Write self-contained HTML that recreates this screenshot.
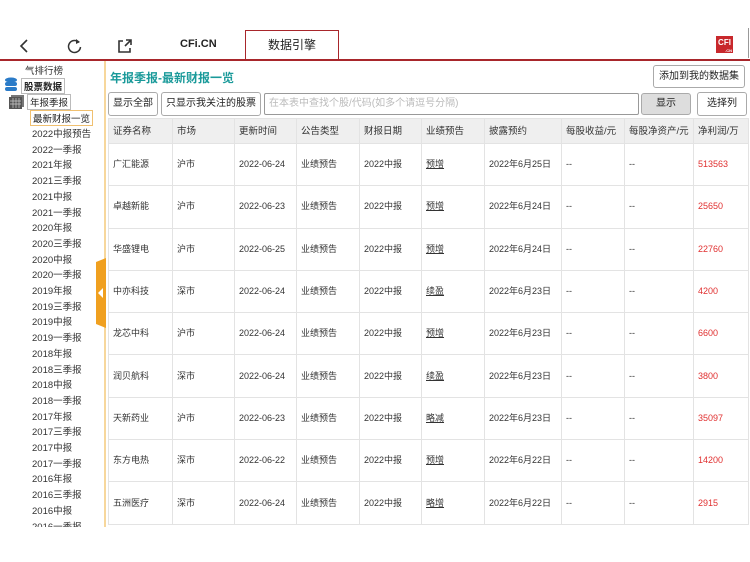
<!DOCTYPE html>
<html><head><meta charset="utf-8"><style>
*{margin:0;padding:0;box-sizing:border-box}
body{width:750px;height:562px;background:#fff;position:relative;overflow:hidden;font-family:"Liberation Sans","Noto Sans CJK SC",sans-serif;color:#333;font-size:10px}
.a{position:absolute}
.topline{left:0;top:59px;width:750px;height:2px;background:#a8262b}
.tab{left:245px;top:30px;width:94px;height:31px;border:1.5px solid #a8262b;border-bottom:none;background:#fff;font-size:12px;text-align:center;line-height:29px;color:#222}
.side{left:0;top:61px;width:105px;height:466px;overflow:hidden}
.vline{left:104px;top:61px;width:2px;height:466px;background:#f7d79c}
.si{position:absolute;left:32px;font-size:9.5px;color:#333}
.btn{position:absolute;border:1px solid #aaa;border-radius:3px;background:#fff;font-size:10px;text-align:center;color:#222}
table{border-collapse:collapse;position:absolute;left:108px;top:118px;width:640px;font-size:9px;table-layout:fixed}
td{border:1px solid #e3e3e3;padding-left:4px;height:42.3px;color:#333;white-space:nowrap;overflow:hidden;vertical-align:middle;line-height:13px}
td span{display:inline-block;vertical-align:middle}
tr.h td{height:25px;background:#efefef;font-size:9.5px}
.r{color:#e03030}
u{text-underline-offset:1px}
</style></head><body>
<svg class="a" style="left:18px;top:38px" width="12" height="16"><path d="M9 2L3 8l6 6" stroke="#333" stroke-width="1.6" fill="none"/></svg>
<svg class="a" style="left:66px;top:37px" width="18" height="18"><path d="M13 5.5A6 6 0 1 0 14.5 10" stroke="#333" stroke-width="1.5" fill="none"/><path d="M10 2l4 3-4 2z" fill="#333"/></svg>
<svg class="a" style="left:117px;top:38px" width="16" height="16"><path d="M6 3H2v11h11v-4" stroke="#333" stroke-width="1.6" fill="none"/><path d="M8 8l6-6M9 2h5v5" stroke="#333" stroke-width="1.6" fill="none"/></svg>
<div class="a" style="left:180px;top:38px;font-size:11px;font-weight:bold;color:#222">CFi.CN</div>
<div class="a tab">数据引擎</div>
<div class="a" style="left:716px;top:36px;width:17px;height:17px;background:#c8282c;color:#fff;font-size:8px;font-weight:bold;text-align:center;line-height:13px">CFI<div style="font-size:4px;line-height:3px;text-align:right;padding-right:1px">.CN</div></div>
<div class="a" style="left:748px;top:28px;width:1px;height:30px;background:#999"></div>
<div class="a topline"></div>

<div class="a side">
<div class="si" style="left:25px;top:2px">气排行榜</div>
<svg class="a" style="left:4px;top:16px" width="14" height="18"><ellipse cx="7" cy="3" rx="6" ry="2.5" fill="#2a7bc8"/><rect x="1" y="5" width="12" height="4" rx="2" fill="#2a7bc8"/><rect x="1" y="10" width="12" height="4" rx="2" fill="#2a7bc8"/></svg>
<div class="si" style="left:21px;top:17px;border:1px solid #bbb;padding:0 2px;font-weight:bold;color:#222">股票数据</div>
<svg class="a" style="left:9px;top:34px" width="16" height="14"><rect x="2" y="0" width="13" height="12" fill="#777"/><rect x="0" y="2" width="13" height="12" fill="#555"/><path d="M1 6h11M1 9h11M4 3v10M7 3v10M10 3v10" stroke="#ccc" stroke-width=".7"/></svg>
<div class="si" style="left:27px;top:33px;border:1px solid #bbb;padding:0 2px;color:#222">年报季报</div>
<div class="si" style="left:30px;top:49px;border:1px solid #f0c070;padding:0 2px;color:#222">最新财报一览</div>
<div class="si" style="top:66px;line-height:15.7px">2022中报预告<br>2022一季报<br>2021年报<br>2021三季报<br>2021中报<br>2021一季报<br>2020年报<br>2020三季报<br>2020中报<br>2020一季报<br>2019年报<br>2019三季报<br>2019中报<br>2019一季报<br>2018年报<br>2018三季报<br>2018中报<br>2018一季报<br>2017年报<br>2017三季报<br>2017中报<br>2017一季报<br>2016年报<br>2016三季报<br>2016中报<br>2016一季报</div>
</div>
<div class="a vline"></div>
<svg class="a" style="left:96px;top:258px" width="10" height="70"><path d="M0 4L10 0V70L0 66Z" fill="#f0a020"/><path d="M7 30L2 35l5 5z" fill="#fff"/></svg>

<div class="a" style="left:110px;top:69px;font-size:12px;color:#1a9a9a;font-weight:bold">年报季报-最新财报一览</div>
<div class="btn" style="left:653px;top:65px;width:92px;height:23px;line-height:21px">添加到我的数据集</div>
<div class="btn" style="left:108px;top:92px;width:50px;height:24px;line-height:22px">显示全部</div>
<div class="btn" style="left:161px;top:92px;width:100px;height:24px;line-height:22px">只显示我关注的股票</div>
<div class="btn" style="left:264px;top:93px;width:375px;height:22px;border-color:#999;text-align:left;padding-left:4px;line-height:20px;color:#bbb;border-radius:2px">在本表中查找个股/代码(如多个请逗号分隔)</div>
<div class="btn" style="left:641px;top:93px;width:50px;height:22px;line-height:20px;background:#ddd">显示</div>
<div class="btn" style="left:697px;top:92px;width:50px;height:24px;line-height:22px">选择列</div>

<table>
<colgroup><col style="width:64px"><col style="width:62px"><col style="width:62px"><col style="width:63px"><col style="width:62px"><col style="width:63px"><col style="width:77px"><col style="width:63px"><col style="width:69px"><col style="width:55px"></colgroup>
<tr class="h"><td>证券名称</td><td>市场</td><td>更新时间</td><td>公告类型</td><td>财报日期</td><td>业绩预告</td><td>披露预约</td><td>每股收益/元</td><td>每股净资产/元</td><td>净利润/万</td></tr>
<tr><td>广汇能源</td><td>沪市</td><td>2022-06-24</td><td>业绩预告</td><td>2022中报</td><td><u>预增</u></td><td>2022年6月25日</td><td>--</td><td>--</td><td class="r">513563</td></tr>
<tr><td>卓越新能</td><td>沪市</td><td>2022-06-23</td><td>业绩预告</td><td>2022中报</td><td><u>预增</u></td><td>2022年6月24日</td><td>--</td><td>--</td><td class="r">25650</td></tr>
<tr><td>华盛锂电</td><td>沪市</td><td>2022-06-25</td><td>业绩预告</td><td>2022中报</td><td><u>预增</u></td><td>2022年6月24日</td><td>--</td><td>--</td><td class="r">22760</td></tr>
<tr><td>中亦科技</td><td>深市</td><td>2022-06-24</td><td>业绩预告</td><td>2022中报</td><td><u>续盈</u></td><td>2022年6月23日</td><td>--</td><td>--</td><td class="r">4200</td></tr>
<tr><td>龙芯中科</td><td>沪市</td><td>2022-06-24</td><td>业绩预告</td><td>2022中报</td><td><u>预增</u></td><td>2022年6月23日</td><td>--</td><td>--</td><td class="r">6600</td></tr>
<tr><td>润贝航科</td><td>深市</td><td>2022-06-24</td><td>业绩预告</td><td>2022中报</td><td><u>续盈</u></td><td>2022年6月23日</td><td>--</td><td>--</td><td class="r">3800</td></tr>
<tr><td>天新药业</td><td>沪市</td><td>2022-06-23</td><td>业绩预告</td><td>2022中报</td><td><u>略减</u></td><td>2022年6月23日</td><td>--</td><td>--</td><td class="r">35097</td></tr>
<tr><td>东方电热</td><td>深市</td><td>2022-06-22</td><td>业绩预告</td><td>2022中报</td><td><u>预增</u></td><td>2022年6月22日</td><td>--</td><td>--</td><td class="r">14200</td></tr>
<tr><td>五洲医疗</td><td>深市</td><td>2022-06-24</td><td>业绩预告</td><td>2022中报</td><td><u>略增</u></td><td>2022年6月22日</td><td>--</td><td>--</td><td class="r">2915</td></tr>
</table>
</body></html>
